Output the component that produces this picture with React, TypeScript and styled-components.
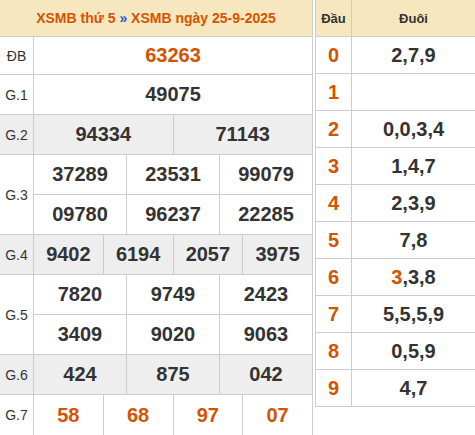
import React from "react";
import styled, { createGlobalStyle } from "styled-components";

const Global = createGlobalStyle`
  html, body { margin: 0; padding: 0; background: #fff; }
  body { font-family: "Liberation Sans", Arial, sans-serif; color: #333; }
`;

const ORANGE = "#d35400";
const LINE = "#cccccc";
const BEIGE = "#f6e7bf";

const Page = styled.div`
  display: flex;
  align-items: flex-start;
  width: 475px;
  height: 435px;
  overflow: hidden;
  gap: 2px;
`;

const LeftTable = styled.div`
  width: 313px;
  flex: none;
  display: flex;
  flex-direction: column;
  border-right: 1px solid ${LINE};
  box-sizing: border-box;
`;

const Caption = styled.div`
  height: 37px;
  box-sizing: border-box;
  background: ${BEIGE};
  border-bottom: 1px solid ${LINE};
  display: flex;
  align-items: center;
  justify-content: center;
  font-size: 14px;
  font-weight: bold;
  color: ${ORANGE};
  white-space: pre;
`;

const Sep = styled.span`
  color: #1a5dc9;
`;

const PrizeRow = styled.div<{ $h: number; $alt?: boolean }>`
  display: flex;
  height: ${(p) => p.$h}px;
  box-sizing: border-box;
  border-bottom: 1px solid ${LINE};
  background: ${(p) => (p.$alt ? "#eeeeee" : "#fff")};
`;

const Label = styled.div`
  width: 33px;
  flex: none;
  border-right: 1px solid ${LINE};
  display: flex;
  align-items: center;
  justify-content: center;
  font-size: 14px;
  color: #333;
`;

const Lines = styled.div`
  flex: 1;
  display: flex;
  flex-direction: column;
`;

const Line = styled.div`
  flex: 1;
  display: flex;
  & + & {
    border-top: 1px solid ${LINE};
  }
`;

const Num = styled.div<{ $hot?: boolean }>`
  flex: 1;
  display: flex;
  align-items: center;
  justify-content: center;
  font-size: 20px;
  font-weight: bold;
  color: ${(p) => (p.$hot ? ORANGE : "#333")};
  & + & {
    border-left: 1px solid ${LINE};
  }
`;

const RightTable = styled.div`
  width: 160px;
  flex: none;
  display: flex;
  flex-direction: column;
  border-left: 1px solid ${LINE};
  box-sizing: border-box;
`;

const LotoRow = styled.div<{ $head?: boolean }>`
  display: flex;
  height: 37px;
  box-sizing: border-box;
  border-bottom: 1px solid ${LINE};
  background: ${(p) => (p.$head ? BEIGE : "#fff")};
`;

const HeadCell = styled.div`
  width: 35px;
  flex: none;
  border-right: 1px solid ${LINE};
  display: flex;
  align-items: center;
  justify-content: center;
  font-size: 20px;
  font-weight: bold;
  color: ${ORANGE};
`;

const TailCell = styled.div`
  flex: 1;
  display: flex;
  align-items: center;
  justify-content: center;
  font-size: 20px;
  font-weight: bold;
  color: #333;
`;

const ColTitle = styled.span`
  font-size: 13px;
  font-weight: bold;
  color: #333;
`;

const Hot = styled.span`
  color: ${ORANGE};
`;

type Prize = { label: string; lines: string[][]; h: number; alt?: boolean; hot?: boolean };

const prizes: Prize[] = [
  { label: "ĐB", lines: [["63263"]], h: 38, hot: true },
  { label: "G.1", lines: [["49075"]], h: 40 },
  { label: "G.2", lines: [["94334", "71143"]], h: 40, alt: true },
  { label: "G.3", lines: [["37289", "23531", "99079"], ["09780", "96237", "22285"]], h: 80 },
  { label: "G.4", lines: [["9402", "6194", "2057", "3975"]], h: 40, alt: true },
  { label: "G.5", lines: [["7820", "9749", "2423"], ["3409", "9020", "9063"]], h: 80 },
  { label: "G.6", lines: [["424", "875", "042"]], h: 40, alt: true },
  { label: "G.7", lines: [["58", "68", "97", "07"]], h: 41, hot: true },
];

const loto: { d: string; t: React.ReactNode }[] = [
  { d: "0", t: "2,7,9" },
  { d: "1", t: "" },
  { d: "2", t: "0,0,3,4" },
  { d: "3", t: "1,4,7" },
  { d: "4", t: "2,3,9" },
  { d: "5", t: "7,8" },
  { d: "6", t: (<><Hot>3</Hot>,3,8</>) },
  { d: "7", t: "5,5,5,9" },
  { d: "8", t: "0,5,9" },
  { d: "9", t: "4,7" },
];

export default function App() {
  return (
    <>
      <Global />
      <Page>
        <LeftTable>
          <Caption>
            XSMB thứ 5 <Sep>»</Sep> XSMB ngày 25-9-2025
          </Caption>
          {prizes.map((p) => (
            <PrizeRow key={p.label} $h={p.h} $alt={p.alt}>
              <Label>{p.label}</Label>
              <Lines>
                {p.lines.map((line, i) => (
                  <Line key={i}>
                    {line.map((n, j) => (
                      <Num key={j} $hot={p.hot}>{n}</Num>
                    ))}
                  </Line>
                ))}
              </Lines>
            </PrizeRow>
          ))}
        </LeftTable>
        <RightTable>
          <LotoRow $head>
            <HeadCell><ColTitle>Đầu</ColTitle></HeadCell>
            <TailCell><ColTitle>Đuôi</ColTitle></TailCell>
          </LotoRow>
          {loto.map((r) => (
            <LotoRow key={r.d}>
              <HeadCell>{r.d}</HeadCell>
              <TailCell>{r.t}</TailCell>
            </LotoRow>
          ))}
        </RightTable>
      </Page>
    </>
  );
}
